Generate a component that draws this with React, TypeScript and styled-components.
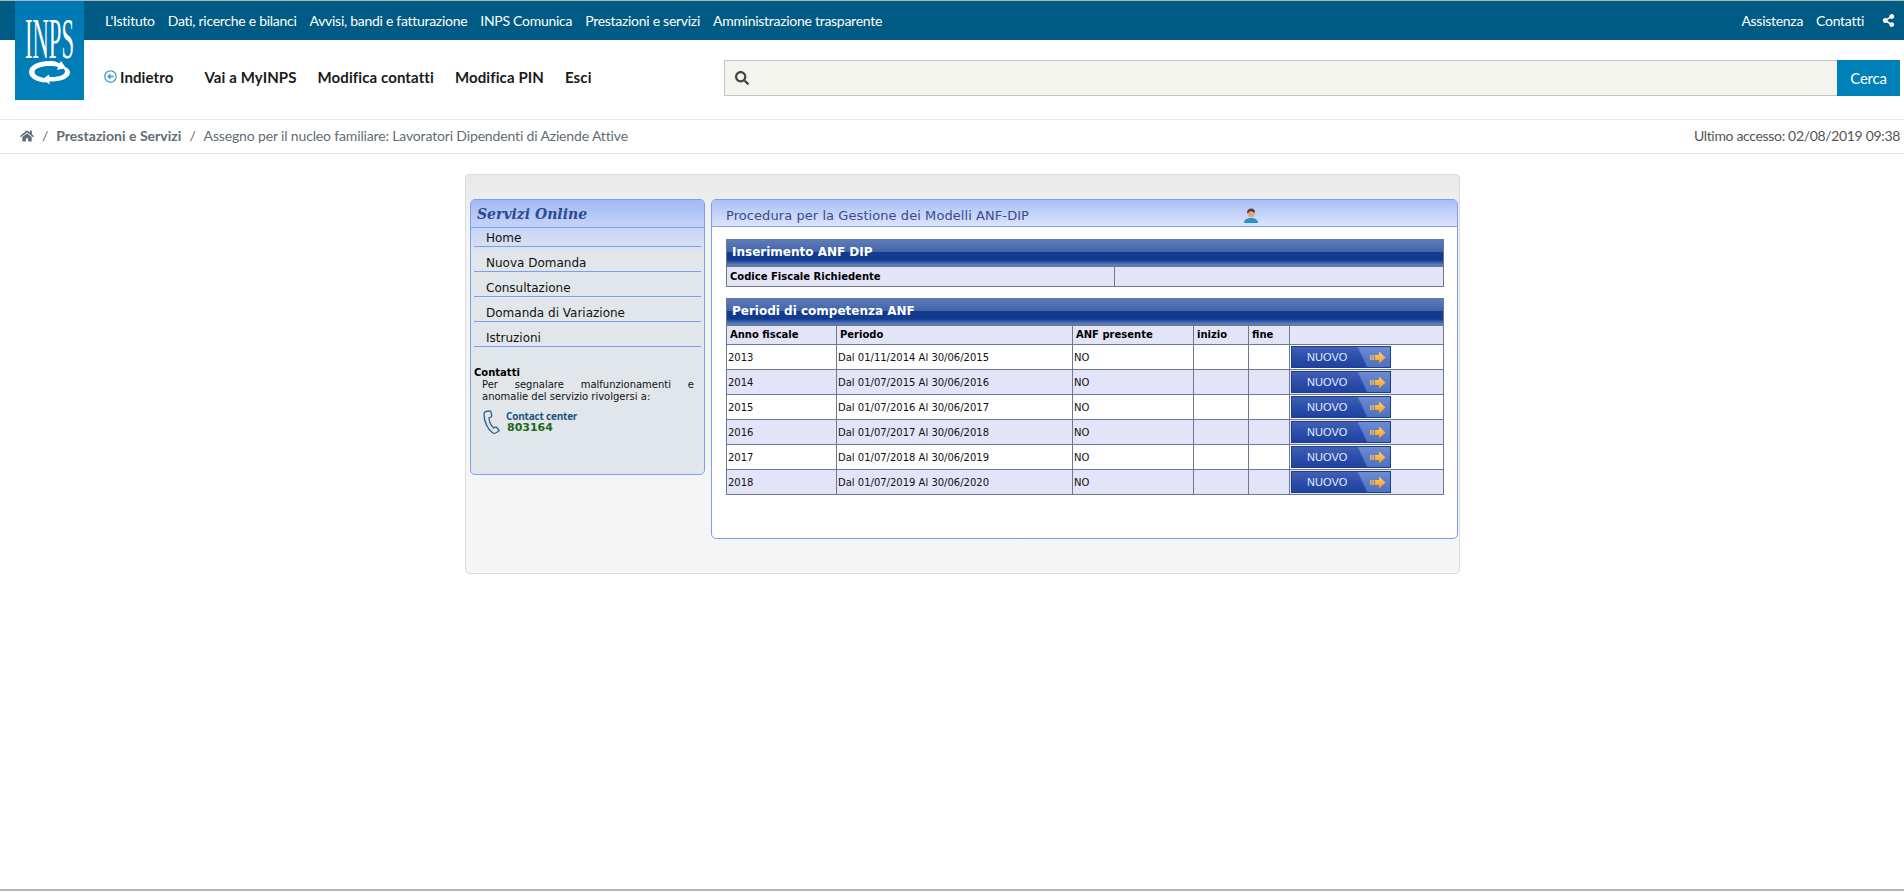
import React from "react";
import styled, { createGlobalStyle } from "styled-components";
import { FaHome, FaSearch, FaShareAlt, FaRegArrowAltCircleLeft } from "react-icons/fa";

const Global = createGlobalStyle`
  html, body { margin: 0; padding: 0; height: 100%; background: #fff; overflow: hidden; }
  * { box-sizing: border-box; }
`;

const titleFont = `"Lato", "Open Sans", sans-serif`;
const oldFont = `"DejaVu Sans", Verdana, sans-serif`;

const Page = styled.div`
  position: relative;
  height: 893px;
  display: flex;
  flex-direction: column;
  border-top: 1px solid #b4b4b4;
`;

const Logo = styled.div`
  position: absolute;
  left: 15px;
  top: 0;
  width: 69px;
  height: 99px;
  background: linear-gradient(180deg, #0079b2, #0080ba);
  display: flex;
  flex-direction: column;
  align-items: center;
`;
const LogoWord = styled.span`
  font-family: "Liberation Serif", serif;
  font-size: 54px;
  line-height: 36px;
  height: 36px;
  margin-top: 20px;
  color: #fff;
  white-space: nowrap;
  transform: scale(0.42, 1.04);
  transform-origin: center;
  width: 69px;
  display: flex;
  justify-content: center;
`;
const LogoMark = styled.svg`
  width: 46px;
  height: 26px;
  margin-top: 2px;
`;

const TopBar = styled.div`
  height: 39px;
  background: #005b84;
  display: flex;
  align-items: center;
  justify-content: space-between;
  padding: 0 9px 0 105px;
  font-family: ${titleFont};
  font-size: 14px;
  letter-spacing: -0.28px;
  color: #fff;
`;
const TopGroup = styled.div`
  display: flex;
  align-items: center;
  gap: 13px;
`;
const TopLink = styled.span`
  white-space: nowrap;
`;
const ShareIcon = styled(FaShareAlt)`
  font-size: 13px;
  margin-left: 5px;
`;

const UserBar = styled.div`
  height: 80px;
  border-bottom: 1px solid #e8e8e0;
  display: flex;
  align-items: flex-start;
  justify-content: space-between;
  padding: 20px 4px 0 104px;
`;
const UserNav = styled.nav`
  display: flex;
  align-items: center;
  height: 33px;
  font-family: ${titleFont};
  font-weight: 700;
  font-size: 15px;
  letter-spacing: 0.1px;
  color: #1a1a1a;
`;
const BackLink = styled.span`
  display: flex;
  align-items: center;
  gap: 3px;
  margin-right: 31px;
  white-space: nowrap;
  svg { color: #3f97d0; font-size: 13px; }
`;
const NavLink = styled.span`
  margin-right: 21px;
  white-space: nowrap;
`;
const Search = styled.form`
  display: flex;
  width: 1176px;
  height: 36px;
`;
const SearchField = styled.div`
  flex: 1;
  border: 1px solid #c6c6c6;
  border-right: 0;
  background: #f3f4ee;
  display: flex;
  align-items: center;
  padding-left: 10px;
  color: #444;
  font-size: 14px;
`;
const SearchButton = styled.button`
  width: 63px;
  border: 0;
  background: #0080b8;
  color: #fff;
  font-family: ${titleFont};
  font-size: 15px;
  letter-spacing: -0.2px;
  padding: 0;
`;

const Crumbs = styled.div`
  height: 34px;
  border-bottom: 1px solid #e8e8e0;
  display: flex;
  align-items: center;
  justify-content: space-between;
  padding: 0 4px 2px 20px;
  font-family: ${titleFont};
  font-size: 14px;
  letter-spacing: -0.15px;
  color: #5f6b75;
`;
const CrumbTrail = styled.div`
  display: flex;
  align-items: center;
  white-space: nowrap;
  svg { font-size: 14px; }
`;
const CrumbSep = styled.span`
  margin: 0 8px;
`;
const CrumbStrong = styled.strong`
  font-weight: 700;
  letter-spacing: 0.03px;
`;
const LastAccess = styled.span`
  color: #555;
  white-space: nowrap;
  letter-spacing: -0.33px;
`;

const Shell = styled.main`
  margin: 20px 0 0 465px;
  width: 995px;
  height: 400px;
  border: 1px solid #dcdcdc;
  border-radius: 4px;
  background: linear-gradient(180deg, #e9e9e9 0, #f4f4f4 60px, #f5f5f5 100%);
  padding: 24px 1px 0 4px;
  display: flex;
  align-items: flex-start;
  gap: 6px;
`;

const SidePanel = styled.aside`
  flex: none;
  width: 235px;
  height: 276px;
  border: 1px solid #7d9ef0;
  border-radius: 5px;
  background: linear-gradient(180deg, #c8d6f6 29px, #e1e6ea 55px);
  font-family: ${oldFont};
  overflow: hidden;
`;
const SideTitle = styled.h2`
  margin: 0;
  height: 28px;
  border-bottom: 1px solid #7d9ef0;
  background: linear-gradient(180deg, #a3b9f5, #c6d4f8);
  font-family: "DejaVu Serif", serif;
  font-style: italic;
  font-weight: 700;
  font-size: 14px;
  line-height: 28px;
  padding-left: 6px;
  color: #2b4a90;
`;
const SideMenu = styled.ul`
  list-style: none;
  margin: 0 3px;
  padding: 0;
`;
const SideItem = styled.li`
  height: 25px;
  border-bottom: 1px solid #7d9ef0;
  padding: 9px 0 0 12px;
  font-size: 12px;
  line-height: 15px;
  color: #111;
  &:first-child {
    height: 19px;
    padding-top: 3px;
  }
`;
const ContactBox = styled.div`
  padding: 19px 3px 0 3px;
  font-size: 10px;
  line-height: 12px;
  color: #111;
`;
const ContactTitle = styled.strong`
  display: block;
  line-height: 13px;
  color: #000;
`;
const ContactText = styled.p`
  margin: 0 7px 0 8px;
  text-align: justify;
`;
const ContactRow = styled.div`
  display: flex;
  align-items: flex-start;
  gap: 6px;
  margin: 7px 0 0 9px;
`;
const PhoneIcon = styled.svg`
  width: 17px;
  height: 24px;
  flex: none;
`;
const ContactLines = styled.div`
  margin-top: 1px;
`;
const ContactLabel = styled.div`
  font-family: "Open Sans", sans-serif;
  font-weight: 700;
  font-size: 10px;
  line-height: 11px;
  letter-spacing: -0.2px;
  color: #1d5580;
`;
const ContactPhone = styled.div`
  font-weight: 700;
  font-size: 11px;
  line-height: 12px;
  margin-left: 1px;
  color: #1a6a1a;
`;

const ContentPanel = styled.section`
  flex: none;
  width: 747px;
  height: 340px;
  border: 1px solid #7d9ef0;
  border-radius: 5px;
  background: #fff;
  font-family: ${oldFont};
`;
const ContentTitle = styled.h1`
  margin: 0;
  height: 27px;
  border-bottom: 1px solid #7d9ef0;
  background: linear-gradient(180deg, #aabff6, #dae4fc);
  border-radius: 4px 4px 0 0;
  display: flex;
  align-items: center;
  position: relative;
  padding: 4px 0 0 14px;
  font-weight: 400;
  font-size: 13px;
  letter-spacing: 0.07px;
  color: #3b4b85;
`;
const UserIcon = styled.svg`
  position: absolute;
  left: 531px;
  top: 8px;
  width: 16px;
  height: 16px;
`;
const ContentBody = styled.div`
  padding: 12px 13px 0 14px;
`;
const BlockTitle = styled.div`
  height: 28px;
  border: 1px solid #6b7a8f;
  border-bottom: 2px solid #6b7a8f;
  background: linear-gradient(180deg, #5e7bb9 0, #3f64a9 49%, #123a8e 50%, #123a8e 80%, #5c82cb 100%);
  color: #fff;
  font-weight: 700;
  font-size: 12px;
  line-height: 25px;
  padding-left: 5px;
`;
const Grid = styled.table`
  border-collapse: collapse;
  table-layout: fixed;
  width: 717px;
  margin-bottom: 11px;
  font-size: 10px;
  color: #111;
`;
const Head = styled.th`
  height: 19px;
  border: 1px solid #6b7a8f;
  border-top: 0;
  background: #e3e4f8;
  text-align: left;
  font-weight: 700;
  padding: 0 0 0 3px;
  color: #000;
`;
const Row = styled.tr<{ $shade: boolean }>`
  background: ${(p) => (p.$shade ? "#e3e4f8" : "#fff")};
`;
const Cell = styled.td`
  height: 25px;
  border: 1px solid #6b7a8f;
  padding: 0 0 0 1px;
`;
const FieldRow = styled.tr`
  background: #e3e4f8;
`;
const FieldHead = styled.th`
  height: 19px;
  border: 1px solid #6b7a8f;
  border-top: 0;
  text-align: left;
  font-weight: 700;
  padding: 0 0 0 3px;
  color: #000;
`;
const FieldValue = styled.td`
  border: 1px solid #6b7a8f;
  border-top: 0;
`;
const NewButton = styled.button`
  display: flex;
  align-items: center;
  justify-content: space-between;
  width: 100px;
  height: 22px;
  padding: 0 4px 0 15px;
  margin: 0;
  border: 1px solid #1a3f8f;
  background:
    linear-gradient(180deg, rgba(255,255,255,0.14) 0, rgba(255,255,255,0.03) 55%, rgba(0,0,0,0.06) 100%),
    linear-gradient(65deg, #2347a8 0, #2347a8 69%, #5578c9 71%, #5578c9 100%);
  color: #e4eeff;
  font-family: "Liberation Sans", Arial, sans-serif;
  font-size: 11px;
`;

const Arrow = () => (
  <svg width="16" height="13" viewBox="0 0 16 13" aria-hidden="true">
    <defs>
      <linearGradient id="arrowFill" x1="0" y1="0" x2="0" y2="1">
        <stop offset="0" stopColor="#ffd26b" />
        <stop offset="1" stopColor="#f59a1e" />
      </linearGradient>
    </defs>
    <rect x="0" y="4" width="1.5" height="5" fill="#f7b84a" />
    <rect x="2.5" y="4" width="1.5" height="5" fill="#f7b84a" />
    <path d="M5 4h4V0.5L15.5 6.5 9 12.5V9H5z" fill="url(#arrowFill)" />
  </svg>
);

const Footer = styled.div`
  margin-top: auto;
  margin-bottom: 2px;
  height: 2px;
  background: #b4b4b4;
`;

const periods: [string, string][] = [
  ["2013", "Dal 01/11/2014 Al 30/06/2015"],
  ["2014", "Dal 01/07/2015 Al 30/06/2016"],
  ["2015", "Dal 01/07/2016 Al 30/06/2017"],
  ["2016", "Dal 01/07/2017 Al 30/06/2018"],
  ["2017", "Dal 01/07/2018 Al 30/06/2019"],
  ["2018", "Dal 01/07/2019 Al 30/06/2020"],
];

const widths = [110, 236, 121, 55, 41, 154];

export default function App() {
  return (
    <Page>
      <Global />
      <Logo>
        <LogoWord>INPS</LogoWord>
        <LogoMark viewBox="0 0 46 26" aria-hidden="true">
          <path d="M23 2C11 2 2 6.500 2 13c0 5.500 7 10 17 10.500l-3-5c-5-.8-8.500-3-8.500-5.500 0-3.500 6.500-6 15.500-6 3.500 0 5.500.4 8 1l-1 3 9-2-5-7-1.500 2.500C30 2.500 26.500 2 23 2z" fill="#fff" />
          <path d="M38.500 8c3 1.500 4.500 3.500 4.500 5.500 0 5-8 9-18 9-1 0-2 0-3-.1l1 3.100-8-5 7-5 .5 2.500c.8 0 1.600.1 2.500.1 8 0 13-2.500 13-5.500 0-1-.5-2-1.500-2.800z" fill="#fff" />
        </LogoMark>
      </Logo>
      <TopBar>
        <TopGroup>
          <TopLink>L'Istituto</TopLink>
          <TopLink>Dati, ricerche e bilanci</TopLink>
          <TopLink>Avvisi, bandi e fatturazione</TopLink>
          <TopLink>INPS Comunica</TopLink>
          <TopLink>Prestazioni e servizi</TopLink>
          <TopLink>Amministrazione trasparente</TopLink>
        </TopGroup>
        <TopGroup>
          <TopLink>Assistenza</TopLink>
          <TopLink>Contatti</TopLink>
          <ShareIcon />
        </TopGroup>
      </TopBar>
      <UserBar>
        <UserNav>
          <BackLink>
            <FaRegArrowAltCircleLeft />
            Indietro
          </BackLink>
          <NavLink>Vai a MyINPS</NavLink>
          <NavLink>Modifica contatti</NavLink>
          <NavLink>Modifica PIN</NavLink>
          <NavLink>Esci</NavLink>
        </UserNav>
        <Search>
          <SearchField>
            <FaSearch />
          </SearchField>
          <SearchButton type="button">Cerca</SearchButton>
        </Search>
      </UserBar>
      <Crumbs>
        <CrumbTrail>
          <FaHome />
          <CrumbSep>/</CrumbSep>
          <CrumbStrong>Prestazioni e Servizi</CrumbStrong>
          <CrumbSep>/</CrumbSep>
          Assegno per il nucleo familiare: Lavoratori Dipendenti di Aziende Attive
        </CrumbTrail>
        <LastAccess>Ultimo accesso: 02/08/2019 09:38</LastAccess>
      </Crumbs>
      <Shell>
        <SidePanel>
          <SideTitle>Servizi Online</SideTitle>
          <SideMenu>
            <SideItem>Home</SideItem>
            <SideItem>Nuova Domanda</SideItem>
            <SideItem>Consultazione</SideItem>
            <SideItem>Domanda di Variazione</SideItem>
            <SideItem>Istruzioni</SideItem>
          </SideMenu>
          <ContactBox>
            <ContactTitle>Contatti</ContactTitle>
            <ContactText>
              Per segnalare malfunzionamenti e anomalie del servizio rivolgersi a:
            </ContactText>
            <ContactRow>
              <PhoneIcon viewBox="0 0 17 24" aria-hidden="true">
                <path
                  d="M3 1.500 7 .8c.6 0 1 .4 1.100 1l.6 4c0 .5-.2 1-.7 1.200L6 8c.2 3 1.700 7 4.500 10l2-.8c.5-.2 1-.1 1.300.3l2 2.500c.3.400.2 1-.2 1.300L12.500 23c-1 .5-2 .3-3-.3C4.500 19 1 11 1 4.500 1 3 1.800 1.800 3 1.500z"
                  fill="none"
                  stroke="#2e5f85"
                  strokeWidth="1.300"
                />
              </PhoneIcon>
              <ContactLines>
                <ContactLabel>Contact center</ContactLabel>
                <ContactPhone>803164</ContactPhone>
              </ContactLines>
            </ContactRow>
          </ContactBox>
        </SidePanel>
        <ContentPanel>
          <ContentTitle>
            Procedura per la Gestione dei Modelli ANF-DIP
            <UserIcon viewBox="0 0 16 16" aria-hidden="true">
              <path d="M1 15c0-3.500 3-5 7-5s7 1.500 7 5z" fill="#2f8fc9" />
              <circle cx="8" cy="5.500" r="3.800" fill="#d8a888" />
              <path d="M4 5c0-3 1.800-4.500 4.200-4.500S12 2 12 4.500c-2-.2-3.500-1-4.500-1.800C7 4 5.500 4.500 4 5z" fill="#5a3a2a" />
            </UserIcon>
          </ContentTitle>
          <ContentBody>
            <BlockTitle>Inserimento ANF DIP</BlockTitle>
            <Grid>
              <colgroup>
                <col style={{ width: 388 }} />
                <col style={{ width: 329 }} />
              </colgroup>
              <tbody>
                <FieldRow>
                  <FieldHead>Codice Fiscale Richiedente</FieldHead>
                  <FieldValue />
                </FieldRow>
              </tbody>
            </Grid>
            <BlockTitle>Periodi di competenza ANF</BlockTitle>
            <Grid>
              <colgroup>
                {widths.map((w, i) => (
                  <col key={i} style={{ width: w }} />
                ))}
              </colgroup>
              <thead>
                <tr>
                  <Head>Anno fiscale</Head>
                  <Head>Periodo</Head>
                  <Head>ANF presente</Head>
                  <Head>inizio</Head>
                  <Head>fine</Head>
                  <Head />
                </tr>
              </thead>
              <tbody>
                {periods.map(([year, period], i) => (
                  <Row key={year} $shade={i % 2 === 1}>
                    <Cell>{year}</Cell>
                    <Cell>{period}</Cell>
                    <Cell>NO</Cell>
                    <Cell />
                    <Cell />
                    <Cell>
                      <NewButton type="button">
                        NUOVO
                        <Arrow />
                      </NewButton>
                    </Cell>
                  </Row>
                ))}
              </tbody>
            </Grid>
          </ContentBody>
        </ContentPanel>
      </Shell>
      <Footer />
    </Page>
  );
}
